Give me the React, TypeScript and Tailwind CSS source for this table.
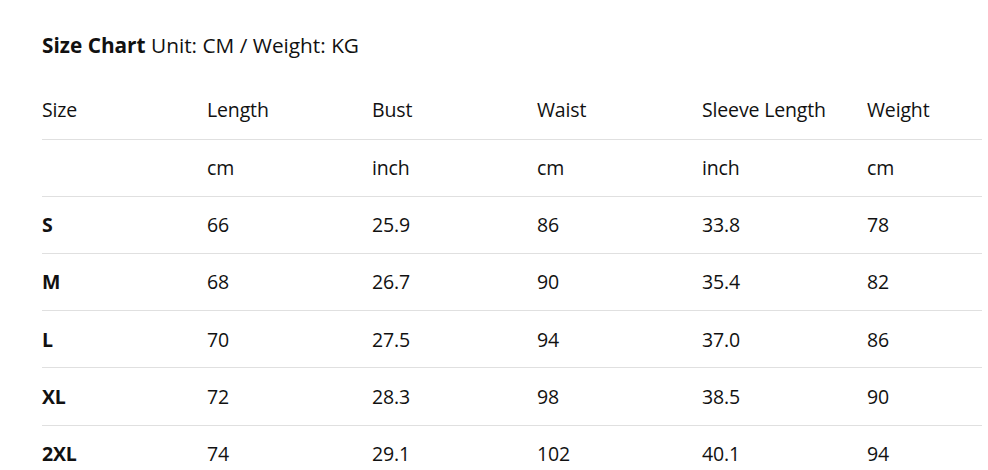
const headers = ['Size', 'Length', 'Bust', 'Waist', 'Sleeve Length', 'Weight'];
const units = ['', 'cm', 'inch', 'cm', 'inch', 'cm'];

const rows = [
  ['S', '66', '25.9', '86', '33.8', '78'],
  ['M', '68', '26.7', '90', '35.4', '82'],
  ['L', '70', '27.5', '94', '37.0', '86'],
  ['XL', '72', '28.3', '98', '38.5', '90'],
  ['2XL', '74', '29.1', '102', '40.1', '94'],
];

export default function App() {
  return (
    <div
      className="min-h-screen bg-white pl-[42px] pr-[6px] pt-[31px] text-[#111111]"
      style={{ fontFamily: '"Open Sans", "Noto Sans", sans-serif' }}
    >
      <h2 className="text-[20.8px] leading-[28px]">
        <span className="font-bold">Size Chart</span> Unit: CM / Weight: KG
      </h2>

      <table className="mt-[23px] w-[940px] table-fixed border-collapse text-[19.5px] tracking-[-0.15px]">
        <colgroup>
          <col className="w-[165px]" />
          <col className="w-[165px]" />
          <col className="w-[165px]" />
          <col className="w-[165px]" />
          <col className="w-[165px]" />
          <col className="w-[115px]" />
        </colgroup>
        <thead>
          <tr className="h-[57px] border-b border-[#e0e0e0]">
            {headers.map((h) => (
              <th key={h} className="p-0 pb-[2px] text-left font-normal whitespace-nowrap">
                {h}
              </th>
            ))}
          </tr>
        </thead>
        <tbody>
          <tr className="h-[57px] border-b border-[#e0e0e0]">
            {units.map((u, i) => (
              <td key={i} className="p-0">
                {u}
              </td>
            ))}
          </tr>
          {rows.map((row) => (
            <tr key={row[0]} className="h-[57.3px] border-b border-[#e0e0e0]">
              {row.map((cell, i) => (
                <td key={i} className={i === 0 ? 'p-0 font-bold' : 'p-0'}>
                  {cell}
                </td>
              ))}
            </tr>
          ))}
        </tbody>
      </table>
    </div>
  );
}
